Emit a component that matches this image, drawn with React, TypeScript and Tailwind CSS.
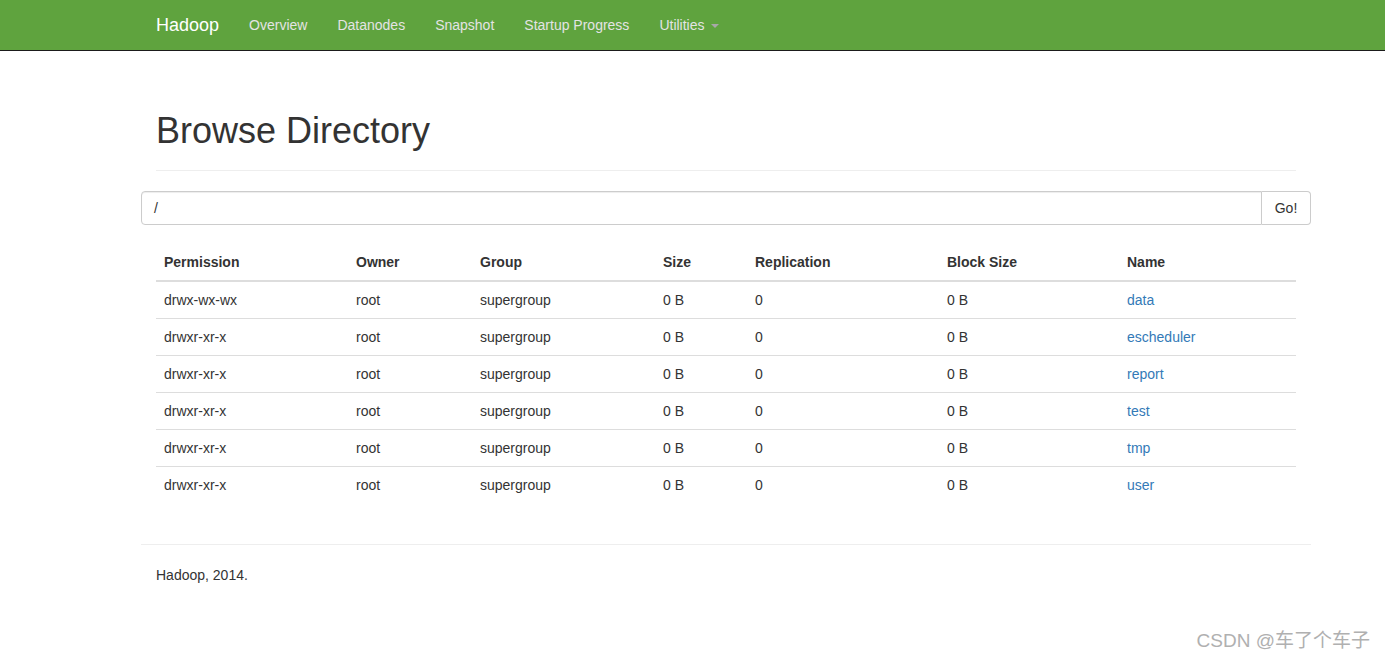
const rows = [
  { perm: "drwx-wx-wx", name: "data" },
  { perm: "drwxr-xr-x", name: "escheduler" },
  { perm: "drwxr-xr-x", name: "report" },
  { perm: "drwxr-xr-x", name: "test" },
  { perm: "drwxr-xr-x", name: "tmp" },
  { perm: "drwxr-xr-x", name: "user" },
];

const navItems = ["Overview", "Datanodes", "Snapshot", "Startup Progress"];

export default function App() {
  return (
    <div className="relative min-h-[660px] bg-white text-[14px] leading-[20px] text-[#333] font-['Liberation_Sans',Arial,sans-serif]">
      {/* navbar */}
      <div className="h-[51px] bg-[#5fa33e] border-b border-[#1b1b1b]">
        <div className="ml-[141px] w-[1170px] flex items-center h-[50px]">
          <span className="px-[15px] text-[18px] text-white">Hadoop</span>
          {navItems.map((item) => (
            <span key={item} className="px-[15px] text-[#e4e4e4]">
              {item}
            </span>
          ))}
          <span className="px-[15px] text-[#e4e4e4] flex items-center">
            Utilities
            <span className="ml-[6px] mt-[2px] w-0 h-0 border-l-[4px] border-r-[4px] border-t-[4px] border-l-transparent border-r-transparent border-t-[#a8a8a8]" />
          </span>
        </div>
      </div>

      <div className="ml-[141px] w-[1170px]">
        {/* page header */}
        <div className="mx-[15px] mt-[60px] pb-[9px] border-b border-[#eee]">
          <h1 className="mb-[10px] text-[36px] leading-[39.6px] font-normal">Browse Directory</h1>
        </div>

        {/* path input */}
        <div className="mt-[20px] flex h-[34px]">
          <div className="flex-1 border border-[#ccc] rounded-l-[4px] px-[12px] flex items-center shadow-[inset_0_1px_1px_rgba(0,0,0,0.075)]">
            /
          </div>
          <button className="w-[49px] border border-l-0 border-[#ccc] rounded-r-[4px] bg-white text-[#333]">
            Go!
          </button>
        </div>

        {/* listing */}
        <table className="mx-[15px] mt-[19px] w-[1140px] border-collapse text-left">
          <thead>
            <tr className="border-b-2 border-[#ddd]">
              <th className="w-[192px] p-[8px] font-bold">Permission</th>
              <th className="w-[124px] p-[8px] font-bold">Owner</th>
              <th className="w-[183px] p-[8px] font-bold">Group</th>
              <th className="w-[92px] p-[8px] font-bold">Size</th>
              <th className="w-[192px] p-[8px] font-bold">Replication</th>
              <th className="w-[180px] p-[8px] font-bold">Block Size</th>
              <th className="p-[8px] font-bold">Name</th>
            </tr>
          </thead>
          <tbody>
            {rows.map((r, i) => (
              <tr key={r.name} className={i > 0 ? "border-t border-[#ddd]" : ""}>
                <td className="p-[8px]">{r.perm}</td>
                <td className="p-[8px]">root</td>
                <td className="p-[8px]">supergroup</td>
                <td className="p-[8px]">0 B</td>
                <td className="p-[8px]">0</td>
                <td className="p-[8px]">0 B</td>
                <td className="p-[8px]">
                  <a className="text-[#337ab7]">{r.name}</a>
                </td>
              </tr>
            ))}
          </tbody>
        </table>

        <div className="border-t border-[#eee] mt-[41px] pt-[20px]">
          <p className="px-[15px]">Hadoop, 2014.</p>
        </div>
      </div>

      {/* watermark */}
      <div className="absolute right-[15px] top-[631px] text-[19px] text-[#b0b0b0] font-['Liberation_Sans','Noto_Sans_CJK_SC',sans-serif]">
        CSDN @车了个车子
      </div>
    </div>
  );
}
